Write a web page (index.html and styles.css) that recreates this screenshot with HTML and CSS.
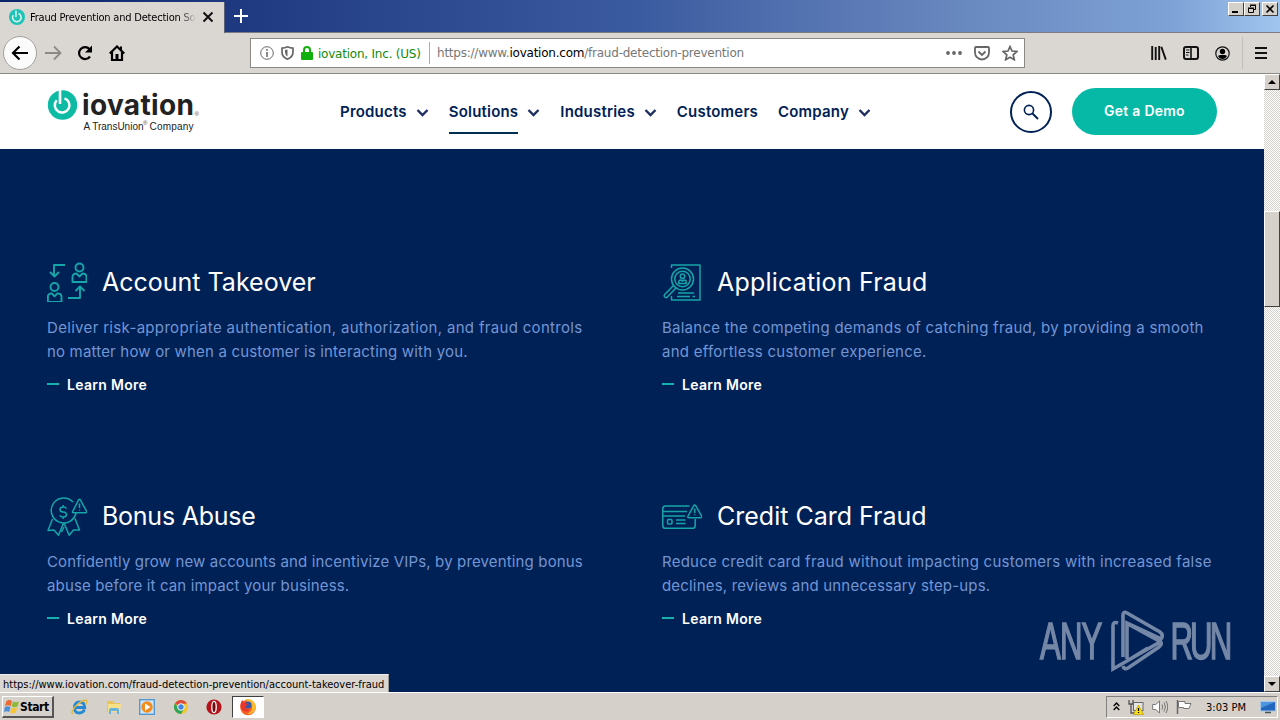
FILE: index.html
```html
<!DOCTYPE html>
<html lang="en">
<head>
  <meta charset="UTF-8" />
  <meta name="viewport" content="width=device-width, initial-scale=1.0"/>
  <title>Fraud Prevention and Detection Solutions</title>
  <link rel="stylesheet" href="styles.css">
</head>
<body>
  <div class="tabbar">
    <div class="tab">
      <svg class="favicon" width="16" height="16" viewBox="0 0 30 30"><circle cx="15" cy="15" r="15" fill="#1fc3b5"/><path d="M13 3v12M18 8.500a8 8 0 1 1-10 3" fill="none" stroke="#d8f5ef" stroke-width="3"/></svg>
      <span class="tab-title">Fraud Prevention and Detection So</span>
      <svg width="12" height="12" viewBox="0 0 12 12"><path d="M1.500 1.500l9 9M10.500 1.500l-9 9" stroke="#111" stroke-width="2"/></svg>
    </div>
    <svg class="new-tab" width="14" height="14" viewBox="0 0 14 14"><path d="M7 0v14M0 7h14" stroke="#fff" stroke-width="2"/></svg>
    <div class="window-buttons">
      <span class="win-btn"><svg width="12" height="10"><path d="M2 8h6" stroke="#000" stroke-width="2"/></svg></span>
      <span class="win-btn"><svg width="12" height="10"><path d="M4.500 3V1.500h5v4H8M4 1h6M2.500 4.500h5v4h-5zM2 4h6" fill="none" stroke="#000"/></svg></span>
      <span class="win-btn close"><svg width="12" height="10"><path d="M2.500 1.500l7 7M9.500 1.500l-7 7" stroke="#000" stroke-width="1.600"/></svg></span>
    </div>
  </div>

  <div class="toolbar">
    <div class="nav-icons">
      <span class="back"><svg width="18" height="16" viewBox="0 0 18 16"><path d="M17 8H2M8.500 1.500L2 8l6.500 6.500" fill="none" stroke="#000" stroke-width="2.200"/></svg></span>
      <svg width="17" height="16" viewBox="0 0 17 16"><path d="M0 8h15M9 1.500L15.500 8 9 14.500" fill="none" stroke="#8d8a86" stroke-width="1.800"/></svg>
      <svg width="16" height="16" viewBox="0 0 16 16"><path d="M13 11.500A6 6 0 1 1 12.500 4" fill="none" stroke="#000" stroke-width="2.200"/><path d="M15 .5v7H8z"/></svg>
      <svg width="16" height="16" viewBox="0 0 16 16"><path d="M.8 8.500L8 1.500l7.200 7M3 7v8h10V7" fill="none" stroke="#000" stroke-width="2.200"/><path d="M6.500 9h3v6h-3zM11 1.500h2v4l-2-2z"/></svg>
    </div>
    <div class="urlbar">
      <svg width="14" height="14" viewBox="0 0 14 14"><circle cx="7" cy="7" r="6.300" fill="none" stroke="#666"/><path d="M7 6v5M7 3v1.700" stroke="#666" stroke-width="1.500"/></svg>
      <svg width="13" height="14" viewBox="0 0 13 14"><path d="M1 2.200Q4 2 6.500.8 9 2 12 2.200V6q0 5-5.500 7.200Q1 11 1 6z" fill="none" stroke="#666" stroke-width="1.700"/><path d="M6.500 3.500v7Q4 9 4 6V4z" fill="#666"/></svg>
      <svg width="12" height="14" viewBox="0 0 12 14"><path d="M3 7V4a3 3 0 0 1 6 0v3" fill="none" stroke="#12b00c" stroke-width="2"/><rect y="6" width="12" height="8" rx="1" fill="#12b00c"/></svg>
      <span class="identity">iovation, Inc. (US)</span>
      <span class="url">https://www.<b>iovation.com</b>/fraud-detection-prevention</span>
      <svg width="16" height="4" viewBox="0 0 16 4"><circle cx="2" cy="2" r="1.900" fill="#666"/><circle cx="8" cy="2" r="1.900" fill="#666"/><circle cx="14" cy="2" r="1.900" fill="#666"/></svg>
      <svg width="16" height="15" viewBox="0 0 16 15"><path d="M1 2q0-1 1-1h12q1 0 1 1v4.500a7 7 0 0 1-14 0z" fill="none" stroke="#666" stroke-width="1.800"/><path d="M4.500 5.500L8 9l3.500-3.500" fill="none" stroke="#666" stroke-width="1.800"/></svg>
      <svg width="16" height="16" viewBox="0 0 16 16"><path d="M8 1.500l2 4.500 5 .5-3.800 3.300 1.100 4.900L8 12.200l-4.300 2.500 1.100-4.900L1 6.500 6 6z" fill="none" stroke="#666" stroke-width="1.700"/></svg>
    </div>
    <div class="tool-icons">
      <svg width="16" height="14" viewBox="0 0 16 14"><path d="M1.200 0v14M4.700 1v13M8.200 0v14M10.300 .8l4.500 12.800" stroke="#111" stroke-width="1.900"/></svg>
      <svg width="16" height="14" viewBox="0 0 16 14"><rect x="1" y="1" width="14" height="12" rx="2" fill="none" stroke="#111" stroke-width="2"/><path d="M8 1v12" stroke="#111" stroke-width="1.600"/><path d="M3 4h3.500M3 6.500h3.500M3 9h2.500" stroke="#111"/></svg>
      <svg width="15" height="15" viewBox="0 0 15 15"><circle cx="7.500" cy="7.500" r="6.700" fill="none" stroke="#111" stroke-width="1.200"/><circle cx="7.500" cy="5.500" r="2.700"/><path d="M3 10q1-1 2.500-1h4q1.500 0 2.500 1-1.500 3-4.500 3T3 10z"/></svg>
      <span class="divider"></span>
      <svg width="12" height="12" viewBox="0 0 12 12"><path d="M0 1h12M0 6h12M0 11h12" stroke="#111" stroke-width="2"/></svg>
    </div>
  </div>

  <div class="viewport">
    <div class="page">
      <header class="site-header">
        <svg class="logo" width="153" height="46" viewBox="0 -1 153 46">
          <circle cx="15.500" cy="15" r="14.700" fill="#0dbba5"/>
          <path d="M13 0v14" stroke="#fff" stroke-width="2.600"/>
          <path d="M17.500 8.300a7.300 7.300 0 1 1-7.800 2" fill="none" stroke="#fff" stroke-width="2.400"/>
          <text class="logo-name" x="35" y="25" textLength="112">iovation</text>
          <text class="logo-reg" x="147.500" y="25.500">®</text>
          <text class="logo-sub" x="36.500" y="39.500" textLength="60">A TransUnion</text>
          <text class="logo-reg" x="96" y="35">®</text>
          <text class="logo-sub" x="102.500" y="39.500" textLength="44">Company</text>
        </svg>
        <nav class="menu">
          <a class="item">Products<svg width="13" height="9"><path d="M1.500 2l5 5 5-5"/></svg></a>
          <a class="item active"><span>Solutions</span><svg width="13" height="9"><path d="M1.500 2l5 5 5-5"/></svg></a>
          <a class="item">Industries<svg width="13" height="9"><path d="M1.500 2l5 5 5-5"/></svg></a>
          <a class="item">Customers</a>
          <a class="item">Company<svg width="13" height="9"><path d="M1.500 2l5 5 5-5"/></svg></a>
        </nav>
        <div class="search"><svg width="16" height="16" viewBox="0 0 16 16"><circle cx="6" cy="6" r="4.600" fill="none" stroke="#002156" stroke-width="1.600"/><path d="M9.500 9.500l5.500 5.500" stroke="#002156" stroke-width="2"/></svg></div>
        <a class="demo">Get a Demo</a>
      </header>

      <main class="cards">
        <article class="card">
          <div class="card-head">
            <svg class="icon bold" width="40" height="40" viewBox="0 0 40 40">
              <path d="M18 3H7v11M3 10l4.500 4.500L12 10M21 36h12V25M28.500 29l4.500-4.500 4.500 4.500"/>
              <circle cx="32.500" cy="5.500" r="4"/><circle cx="7.500" cy="25" r="4"/>
              <path d="M25.500 20v-5q0-3.500 4-3.500l3 3 3-3q4 0 4 3.500v5zM.9 39.900v-5q0-3.500 4-3.500l2.600 3 3-3q4 0 4 3.500v5z"/>
            </svg>
            <h3>Account Takeover</h3>
          </div>
          <p>Deliver risk-appropriate authentication, authorization, and fraud controls<br><span class="tight">no matter how or when a customer is interacting with you.</span></p>
          <a class="more">Learn More</a>
        </article>

        <article class="card">
          <div class="card-head">
            <svg class="icon" width="40" height="40" viewBox="0 0 40 40">
              <path d="M9.500 6V3H38v35H9.500v-4"/>
              <circle cx="20.500" cy="17" r="11"/><circle cx="20.500" cy="17" r="7.700"/>
              <circle cx="20.500" cy="14.200" r="2.200"/><path d="M16.800 21.500v-1.500q0-2 2-2l1.700 1 1.700-1q2 0 2 2v1.500z"/>
              <path d="M11.500 23.500L2.700 32.500q-1.200 1.300 0 2.500 1.400 1.200 2.600 0L14 26M16 31h16M15 34.500h13M30.500 34.500h2.500"/>
            </svg>
            <h3 class="wide">Application Fraud</h3>
          </div>
          <p>Balance the competing demands of catching fraud, by providing a smooth<br>and effortless customer experience.</p>
          <a class="more">Learn More</a>
        </article>

        <article class="card">
          <div class="card-head">
            <svg class="icon" width="40" height="40" viewBox="0 0 40 40">
              <path d="M26 6a12.500 12.500 0 1 0 3 11"/>
              <path d="M19.500 12.500q-.8-1.600-3.300-1.600-3.200 0-3.200 2.500t3.200 2.600 3.300 2.600q0 2.500-3.300 2.500-2.600 0-3.400-1.700M16.200 9v2M16.200 21v2"/>
              <path d="M31.500 4.200q1-1.800 2 0l6 11q.8 1.500-.8 1.500H26.500q-1.500 0-.7-1.500zM32.500 7.500v4.500M32.500 13.500v1"/>
              <path d="M5.500 23L1 34.500l6-.5 4.500 5.200 5-12.200M17 27l5.200 12.200 4.300-5.200h6L28 22.500M17 31l-2.500 5"/>
            </svg>
            <h3 class="narrow">Bonus Abuse</h3>
          </div>
          <p>Confidently grow new accounts and incentivize VIPs, by preventing bonus<br>abuse before it can impact your business.</p>
          <a class="more">Learn More</a>
        </article>

        <article class="card">
          <div class="card-head">
            <svg class="icon" width="40" height="40" viewBox="0 0 40 40">
              <path d="M27.500 10H3.500Q.8 10 .8 12.700v17q0 2.600 2.700 2.600h27q2.700 0 2.700-2.600V23M.8 15.500H25M.8 20H23"/>
              <rect x="5.500" y="23.500" width="4.500" height="4.500" rx="1"/>
              <path d="M14 24h9.500M14 27.500h9.500"/>
              <path d="M31.500 10q1.200-2 2.400 0l5.600 10q.8 1.700-1 1.700H27q-1.800 0-.9-1.700zM32.700 12.500v4.500M32.700 18.300v1"/>
            </svg>
            <h3>Credit Card Fraud</h3>
          </div>
          <p>Reduce credit card fraud without impacting customers with increased false<br><span class="tight">declines, reviews and unnecessary step-ups.</span></p>
          <a class="more">Learn More</a>
        </article>
      </main>

      <svg class="watermark" width="194" height="64" viewBox="0 0 194 64">
        <text transform="translate(1 50) scale(.6 1)" x="0" y="0" textLength="104">ANY</text>
        <text transform="translate(131.500 50) scale(.6 1)" x="0" y="0" textLength="103">RUN</text>
        <path class="mark-line" d="M79 14q-5-2-5 3v43l47-27M84 48V6q0-4 4-2l33 19q4 3 1 7L88 14V50M121 32q3 3-1 6L89 59q-4 2-5-2M88 52l21-13M89 15l33 18"/>
      </svg>
      <div class="status">https://www.iovation.com/fraud-detection-prevention/account-takeover-fraud</div>
    </div>
    <div class="scrollbar">
      <span class="sb-btn"><svg width="8" height="4"><path d="M0 4l4-4 4 4z"/></svg></span>
      <span class="sb-thumb"></span>
      <span class="sb-btn"><svg width="8" height="4"><path d="M0 0l4 4 4-4z"/></svg></span>
    </div>
  </div>

  <div class="taskbar">
    <div class="start"><svg width="16" height="15" viewBox="0 0 16 15"><path d="M2.500 2q3-2 5.500 0L6.800 7Q4 5.500 1 7z" fill="#ec6a30"/><path d="M9 2.500q3 1.500 6 0l-1.500 5q-3 1.500-5.700 0z" fill="#8cba37"/><path d="M.8 8q3-1.500 5.700 0L5.200 13Q2.500 11.500 0 13z" fill="#4a90d8"/><path d="M7.500 8.500q3 1.500 5.700 0l-1.500 5q-2.700 1.500-5.500 0z" fill="#f7c431"/></svg><span>Start</span></div>
    <div class="quick">
      <svg width="17" height="16" viewBox="0 0 17 16"><path d="M13.500 10.500Q12 14 8.500 14 3.500 14 3.500 8.500T8.500 3q5 0 5.300 5.500H4" fill="none" stroke="#2389d5" stroke-width="2.800"/><path d="M2 15Q-1 14 4 8T15 1q2 1-.5 5" fill="none" stroke="#e5b836" stroke-width="1.300"/></svg>
      <svg width="16" height="16" viewBox="0 0 16 16"><path d="M1 2h6l1 2h6v9H1z" fill="#e8c25a"/><path d="M2 5h13l-1 8H2z" fill="#f7e08a"/><path d="M3 15v-4q0-2 2-2h6q2 0 2 2v4h-2v-3H5v3z" fill="#66b3df"/></svg>
      <svg width="16" height="16" viewBox="0 0 16 16"><rect x=".7" y=".7" width="14.600" height="14.600" fill="#cfe5f8" stroke="#5598d2" stroke-width="1.400"/><circle cx="8" cy="8" r="5.700" fill="#f28c1e"/><path d="M6 4.500v7L11.500 8z" fill="#fff"/></svg>
      <svg width="16" height="16" viewBox="0 0 16 16"><circle cx="8" cy="8" r="7" fill="#f5c62b"/><path d="M8 8L1.900 4.500A7 7 0 0 1 14 4.500L8 5z" fill="#dd4b3e"/><path d="M1.900 4.500A7 7 0 0 0 8 15l3-5-5-1z" fill="#31a457"/><circle cx="8" cy="8" r="3.300" fill="#4285e0" stroke="#fff" stroke-width="1"/></svg>
      <svg width="16" height="16" viewBox="0 0 16 16"><circle cx="8" cy="8" r="7.600" fill="#b51219"/><ellipse cx="8" cy="8" rx="2.200" ry="5.600" fill="#700b10" stroke="#fff" stroke-width="1.300"/></svg>
      <span class="running"><svg width="18" height="18" viewBox="0 0 18 18"><circle cx="9" cy="9.500" r="7.800" fill="#f4601f"/><path d="M7 1q8-1 10 8-2 8-9 7 6-3 5-8Q11 5 8 4z" fill="#fdbb2c"/><circle cx="9" cy="7" r="3.600" fill="#3a55a8"/><path d="M1.500 6L3 2l3 3 3 1-3 3q1 3 5 2-2 4-6 2T1.500 6z" fill="#e8352e"/></svg></span>
    </div>
    <div class="tray">
      <svg width="7" height="9" viewBox="0 0 7 9"><path d="M.7 4l2.800-3 2.800 3M.7 8l2.800-3 2.800 3" fill="none" stroke="#000" stroke-width="1.300"/></svg>
      <svg width="16" height="16" viewBox="0 0 16 16"><path d="M1 1v4h4V1M3 5v9h4" fill="none" stroke="#555" stroke-width="1.300"/><rect x="5.500" y="3.500" width="9.500" height="8" fill="#e5e5e5" stroke="#666"/><path d="M10.500 6l5 9.500h-10z" fill="#ffdf1b" stroke="#b69b00" stroke-width=".7"/><path d="M10.500 9v3M10.500 13v1" stroke="#000" stroke-width="1.300"/></svg>
      <svg width="16" height="16" viewBox="0 0 16 16"><path d="M.7 5.500h3L7.500 2v12l-3.800-3.500h-3z" fill="#fff" stroke="#777"/><path d="M10 5.500q1.500 2.500 0 5M12 3.500q3 4.500 0 9M14 2q3.500 6 0 12" fill="none" stroke="#777"/></svg>
      <svg width="16" height="16" viewBox="0 0 16 16"><path d="M1.500 1v14" stroke="#666" stroke-width="1.500"/><path d="M2.500 2.500h6.500v2h6l-2 5H7.500v-1h-5z" fill="#fff" stroke="#777"/></svg>
      <span class="clock">3:03 PM</span>
      <svg width="16" height="14" viewBox="0 0 16 14"><rect x=".5" y="1.500" width="15" height="9.500" fill="#2366bd" stroke="#a7c6e8"/><path d="M1 2h14L1 8z" fill="#4e94df"/><path d="M5 12.500h6" stroke="#455" stroke-width="1.500"/></svg>
    </div>
  </div>
</body>
</html>
```
FILE: styles.css
```css
* {
  box-sizing: border-box;
}

body {
  margin: 0;
  width: 1280px;
  height: 720px;
  overflow: hidden;
  display: flex;
  flex-direction: column;
  background: #d5d0c9;
  font-family: "DejaVu Sans Condensed", "DejaVu Sans", sans-serif;
  font-size: 11px;
  color: #000;
}

svg {
  flex-shrink: 0;
}

/* browser window */
.tabbar {
  height: 33px;
  display: flex;
  align-items: flex-start;
  background: linear-gradient(90deg, #0a246a 0, #213b82 20%, #3b5ba0 50%, #6483bc 72%, #7fa3d6 92%, #a0c6ef 100%);
  border-bottom: 1px solid #7b7c82;
}

.tab {
  width: 225px;
  height: 31px;
  margin-top: 2px;
  padding: 0 12px 0 9px;
  display: flex;
  align-items: center;
  background: #dad6d2;
  border-right: 1px solid #59617a;
}

.tab svg {
  margin-top: -2px;
}

.tab-title {
  width: 166px;
  margin: -1px 7px 0 5px;
  white-space: nowrap;
  letter-spacing: -0.2px;
  -webkit-mask-image: linear-gradient(90deg, #000 150px, transparent 166px);
}

.new-tab {
  margin: 9px 0 0 9px;
}

.window-buttons {
  margin: 2px 2px 0 auto;
  display: flex;
}

.win-btn {
  width: 16px;
  height: 14px;
  padding: 1px;
  background: #d5d0c9;
  border: 1px solid #fff;
  border-right-color: #404040;
  border-bottom-color: #404040;
}

.win-btn svg {
  display: block;
}

.close {
  margin-left: 2px;
}

.toolbar {
  height: 41px;
  display: flex;
  align-items: center;
  background: #dad6d2;
  border-bottom: 1px solid #8b8984;
}

.nav-icons {
  width: 250px;
  padding-left: 3px;
  display: flex;
  align-items: center;
  gap: 15.7px;
}

.back {
  width: 34px;
  height: 34px;
  margin-right: -8px;
  border: 1px solid #a5a29d;
  border-radius: 50%;
  background: #fbfbfb;
  display: flex;
  align-items: center;
  justify-content: center;
}

.urlbar {
  width: 775px;
  height: 30px;
  padding: 0 6px 0 9px;
  display: flex;
  align-items: center;
  background: #fff;
  border: 1px solid #8b8984;
  gap: 7px;
  font-family: "DejaVu Sans", sans-serif;
  font-size: 12px;
}

.identity {
  width: 112px;
  height: 22px;
  line-height: 24px;
  margin-left: -2px;
  color: #128a0c;
  border-right: 1px solid #7fca7c;
  letter-spacing: -0.22px;
  white-space: nowrap;
}

.url {
  flex: 1;
  line-height: 24px;
  color: #777;
  letter-spacing: -0.23px;
}

.url b {
  font-weight: normal;
  color: #000;
}

.urlbar svg:nth-last-child(-n+2) {
  margin-left: 5px;
}

.tool-icons {
  margin-left: auto;
  padding-right: 13px;
  display: flex;
  align-items: center;
  gap: 16px;
}

.divider {
  width: 1px;
  height: 32px;
  margin: 0 -4px 0 -4px;
  background: #c3bfba;
}

.viewport {
  height: 618px;
  display: flex;
}

/* site */
.page {
  position: relative;
  width: 1264px;
  background: #002156;
  font-family: Inter, sans-serif;
}

.site-header {
  height: 75px;
  padding: 0 47px;
  display: flex;
  align-items: center;
  background: #fff;
}

.logo {
  width: 153px;
  overflow: visible;
}

.logo-name {
  font: 700 28px Inter, sans-serif;
  fill: #222;
}

.logo-sub {
  font: 10px "Liberation Sans", sans-serif;
  fill: #222;
}

.logo-reg {
  font: 6px "Liberation Sans", sans-serif;
  fill: #444;
}

.menu {
  margin-left: 140px;
  display: flex;
  gap: 20px;
}

.item {
  position: relative;
  display: flex;
  align-items: center;
  font-size: 15px;
  font-weight: 600;
  letter-spacing: 0.2px;
  color: #002156;
  height: 42px;
}

.item svg {
  margin: 2px 0 0 9px;
  fill: none;
  stroke: #1d2f63;
  stroke-width: 2.4;
}

.active span {
  margin-top: 2px;
  line-height: 40px;
  border-bottom: 2px solid #00304e;
}

.search {
  width: 42px;
  height: 42px;
  margin: 1px 20px 0 auto;
  border: 2px solid #002156;
  border-radius: 50%;
  display: flex;
  align-items: center;
  justify-content: center;
}

.demo {
  width: 145px;
  height: 47px;
  border-radius: 24px;
  background: #05b9a6;
  color: #fff;
  font-size: 14px;
  font-weight: 600;
  letter-spacing: 0.25px;
  line-height: 46px;
  text-align: center;
}

.cards {
  padding: 113px 47px 0;
  display: grid;
  grid-template-columns: 555px 555px;
  column-gap: 60px;
  row-gap: 99px;
}

.card-head {
  height: 40px;
  display: flex;
  align-items: center;
  gap: 15px;
}

.icon {
  fill: none;
  stroke: #16a5a8;
  stroke-width: 1.5;
  stroke-linejoin: round;
}

.bold {
  stroke-width: 1.9;
}

h3 {
  margin: 0;
  color: #fff;
  font-size: 25px;
  font-weight: 400;
}

.wide {
  letter-spacing: 0.2px;
}

.narrow {
  letter-spacing: -0.25px;
}

.card p {
  margin: 14px 0 8px;
  color: #7495d3;
  font-size: 15px;
  line-height: 24px;
  letter-spacing: 0.25px;
  white-space: nowrap;
}

.card:first-child p {
  letter-spacing: 0.32px;
}

.card:nth-child(3) p {
  letter-spacing: 0.15px;
}

.card .tight {
  letter-spacing: 0.18px;
}

.more {
  height: 25px;
  padding-bottom: 1px;
  display: flex;
  align-items: center;
  gap: 8px;
  color: #fff;
  font-size: 14px;
  font-weight: 600;
  letter-spacing: 0.3px;
}

.more::before {
  content: "";
  width: 12px;
  height: 2px;
  background: #16b0ae;
}

.watermark {
  position: absolute;
  right: 31px;
  bottom: 19px;
  opacity: 0.55;
}

.watermark text {
  font: 52px "Liberation Sans", sans-serif;
  fill: #d5dbe8;
  stroke: #d5dbe8;
  stroke-width: 1.6;
}

.mark-line {
  fill: none;
  stroke: #d5dbe8;
  stroke-width: 3.6;
}

.status {
  position: absolute;
  left: 0;
  bottom: 0;
  width: 389px;
  height: 18px;
  padding-left: 3px;
  background: #dad6d2;
  border-top: 1px solid #eee;
  border-right: 1px solid #999;
  font: 11px/19px "DejaVu Sans Condensed", "DejaVu Sans", sans-serif;
  white-space: nowrap;
}

.scrollbar {
  width: 16px;
  display: flex;
  flex-direction: column;
  background: repeating-conic-gradient(#fff 0 25%, #d5d0c9 0 50%) 0 0 / 2px 2px;
}

.sb-btn,
.sb-thumb {
  background: #d5d0c9;
  border: 1px solid #fff;
  border-right-color: #404040;
  border-bottom-color: #404040;
}

.sb-btn {
  height: 16px;
  display: flex;
  align-items: center;
  justify-content: center;
}

.sb-thumb {
  height: 96px;
  margin: 121px 0 auto;
}

/* desktop */
.taskbar {
  height: 28px;
  padding: 2px;
  display: flex;
  align-items: center;
  background: #d5d0c9;
  border-top: 1px solid #fff;
}

.start {
  width: 52px;
  height: 22px;
  padding-left: 1px;
  display: flex;
  align-items: center;
  border: 1px solid #fff;
  border-right: 2px solid #555;
  border-bottom: 2px solid #555;
  font-size: 12px;
  font-weight: bold;
  letter-spacing: -0.4px;
}

.start span {
  margin-top: 1px;
}

.quick {
  margin-left: 17px;
  display: flex;
  align-items: center;
  gap: 17.5px;
}

.running {
  width: 32px;
  height: 22px;
  margin-left: -8px;
  display: flex;
  align-items: center;
  justify-content: center;
  background: #fff;
  border: 1px solid #404040;
  border-right-color: #fff;
  border-bottom-color: #fff;
}

.tray {
  width: 172px;
  height: 22px;
  margin-left: auto;
  padding: 0 1px 0 6px;
  display: flex;
  align-items: center;
  gap: 8px;
  border: 1px solid #808080;
  border-right-color: #fff;
  border-bottom-color: #fff;
}

.clock {
  margin: 2px auto 0;
}
```
